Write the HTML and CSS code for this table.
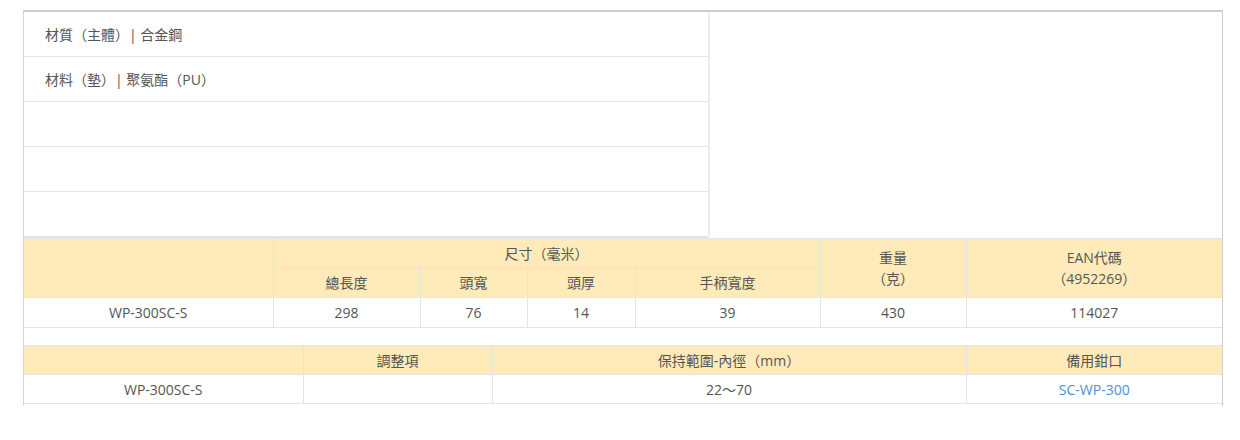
FILE: index.html
```html
<!DOCTYPE html>
<html lang="zh-Hant">
<head>
<meta charset="utf-8">
<title>WP-300SC-S</title>
<link rel="stylesheet" href="styles.css">
</head>
<body>
<div class="panel">
  <div class="specs">
    <div class="spec-row">材質（主體）| 合金鋼</div>
    <div class="spec-row">材料（墊）| 聚氨酯（PU）</div>
    <div class="spec-row"></div>
    <div class="spec-row"></div>
    <div class="spec-row last"></div>
  </div>
  <table class="grid grid-a">
    <colgroup>
      <col class="a1"><col class="a2"><col class="a3"><col class="a4"><col class="a5"><col class="a6"><col class="a7">
    </colgroup>
    <thead>
      <tr class="h1">
        <th rowspan="2"></th>
        <th colspan="4">尺寸（毫米）</th>
        <th rowspan="2">重量<br>（克）</th>
        <th rowspan="2">EAN代碼<br>（4952269）</th>
      </tr>
      <tr class="h2">
        <th>總長度</th>
        <th>頭寬</th>
        <th>頭厚</th>
        <th>手柄寬度</th>
      </tr>
    </thead>
    <tbody>
      <tr class="d">
        <td>WP-300SC-S</td>
        <td>298</td>
        <td>76</td>
        <td>14</td>
        <td>39</td>
        <td>430</td>
        <td>114027</td>
      </tr>
    </tbody>
  </table>
  <table class="grid grid-b">
    <colgroup>
      <col class="b1"><col class="b2"><col class="b3"><col class="b4">
    </colgroup>
    <thead>
      <tr class="h1">
        <th></th>
        <th>調整項</th>
        <th>保持範圍-內徑（mm）</th>
        <th>備用鉗口</th>
      </tr>
    </thead>
    <tbody>
      <tr class="d">
        <td>WP-300SC-S</td>
        <td></td>
        <td>22～70</td>
        <td><a class="link" href="#">SC-WP-300</a></td>
      </tr>
    </tbody>
  </table>
</div>
</body>
</html>
```

FILE: styles.css
```css
html, body {
  margin: 0;
  padding: 0;
  background: #ffffff;
}

body {
  padding: 10px 0 0 23px;
  font-family: "Open Sans", "Noto Sans CJK TC", sans-serif;
  font-size: 14px;
  color: #555555;
}

.panel {
  width: 1198px;
  border-top: 2px solid #cccccc;
  border-left: 1px solid #d6d6d6;
  border-right: 1px solid #cccccc;
  padding-bottom: 2px;
  display: flex;
  flex-direction: column;
}

.specs {
  width: 684px;
  border-right: 2px solid #ececec;
  border-bottom: 2px solid #e4e4e4;
  border-radius: 0 4px 4px 0;
}

.spec-row {
  height: 45px;
  box-sizing: border-box;
  border-bottom: 1px solid #e6e6e6;
  padding-left: 21px;
  display: flex;
  align-items: center;
}

.spec-row.last {
  border-bottom: none;
  height: 44px;
}

.grid {
  width: 1198px;
  table-layout: fixed;
  border-collapse: collapse;
}

.grid-b {
  margin-top: 17px;
}

.grid th,
.grid td {
  border: 1px solid #e4e4e4;
  text-align: center;
  padding: 0;
  font-weight: normal;
  line-height: 21px;
}

.grid tr > :first-child {
  border-left: none;
}

.grid tr > :last-child {
  border-right: none;
}

.grid th {
  background: #ffebb9;
  color: #555555;
}

.grid .h1 {
  height: 29px;
}

.grid .h2 {
  height: 30px;
}

.grid .d {
  height: 29px;
}

.grid-a .d {
  height: 30px;
}

.a1 { width: 249px; }
.a2 { width: 147px; }
.a3 { width: 107px; }
.a4 { width: 108px; }
.a5 { width: 185px; }
.a6 { width: 146px; }
.a7 { width: 256px; }

.b1 { width: 279px; }
.b2 { width: 189px; }
.b3 { width: 474px; }
.b4 { width: 256px; }

.link {
  color: #4a90e2;
  text-decoration: none;
}
```
